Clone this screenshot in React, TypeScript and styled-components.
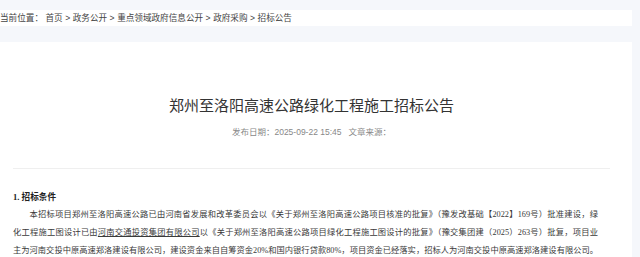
import React from "react";
import styled, { createGlobalStyle } from "styled-components";

const GlobalStyle = createGlobalStyle`
  html, body {
    margin: 0;
    padding: 0;
    background: #f5f7fb;
  }
  body {
    font-family: "Liberation Sans", "Noto Sans CJK SC", sans-serif;
    color: #333;
  }
`;

const crumbs = ["首页", "政务公开", "重点领域政府信息公开", "政府采购", "招标公告"];

const App = () => {
  return (
    <>
      <GlobalStyle />
      <Page>
        <Breadcrumb>
          <CrumbLabel>当前位置：</CrumbLabel>
          {crumbs.map((c, i) => (
            <React.Fragment key={c}>
              {i > 0 && <Sep>&gt;</Sep>}
              <Crumb href="#">{c}</Crumb>
            </React.Fragment>
          ))}
        </Breadcrumb>

        <Article>
          <Title>郑州至洛阳高速公路绿化工程施工招标公告</Title>
          <Meta>
            <span>发布日期：2025-09-22 15:45</span>
            <span>文章来源：</span>
          </Meta>
          <Divider />

          <Body>
            <SectionHead>1. 招标条件</SectionHead>
            <Para>
              <Line $indent>
                本招标项目郑州至洛阳高速公路已由河南省发展和改革委员会以《关于郑州至洛阳高速公路项目核准的批复》（豫发改基础【2022】169号）批准建设，绿
              </Line>
              <Line>
                化工程施工图设计已由<Underlined>河南交通投资集团有限公司</Underlined>以《关于郑州至洛阳高速公路项目绿化工程施工图设计的批复》（豫交集团建（2025）263号）批复，项目业
              </Line>
              <Line>
                主为河南交投中原高速郑洛建设有限公司，建设资金来自自筹资金20%和国内银行贷款80%，项目资金已经落实，招标人为河南交投中原高速郑洛建设有限公司。
              </Line>
            </Para>
          </Body>
        </Article>
      </Page>
    </>
  );
};

export default App;

const Page = styled.div`
  width: 632px;
  padding-top: 10px;
  display: flex;
  flex-direction: column;
  gap: 16px;
`;

const Breadcrumb = styled.nav`
  height: 16px;
  background: #fff;
  display: flex;
  align-items: center;
  font-size: 8.6px;
  line-height: 16px;
  color: #444;
  white-space: nowrap;
`;

const CrumbLabel = styled.span`
  margin-right: 2.5px;
`;

const Crumb = styled.a`
  color: #444;
  text-decoration: none;
`;

const Sep = styled.span`
  margin: 0 2.5px;
`;

const Article = styled.main`
  background: #fff;
  padding: 54px 22px 40px 13px;
  display: flex;
  flex-direction: column;
`;

const Title = styled.h1`
  margin: 0;
  font-size: 15px;
  line-height: 20px;
  font-weight: 400;
  color: #333;
  text-align: center;
`;

const Meta = styled.div`
  margin-top: 10px;
  display: flex;
  justify-content: center;
  gap: 7px;
  font-size: 8.5px;
  line-height: 12px;
  color: #888;
`;

const Divider = styled.hr`
  margin: 30px 0 0;
  border: none;
  border-top: 1px solid #efefef;
`;

const Body = styled.section`
  margin-top: 19px;
  width: 585px;
  font-family: "Liberation Serif", "Noto Sans CJK SC", serif;
  font-size: 8.25px;
  line-height: 18px;
  color: #3a3a3a;
`;

const SectionHead = styled.h3`
  margin: 0;
  font-size: 8.6px;
  line-height: 18px;
  font-weight: bold;
  color: #222;
`;

const Para = styled.p`
  margin: 0;
`;

const Line = styled.span<{ $indent?: boolean }>`
  display: block;
  white-space: nowrap;
  text-align: justify;
  text-align-last: justify;
  text-indent: ${(p) => (p.$indent ? "2em" : "0")};
`;

const Underlined = styled.span`
  text-decoration: underline;
`;
